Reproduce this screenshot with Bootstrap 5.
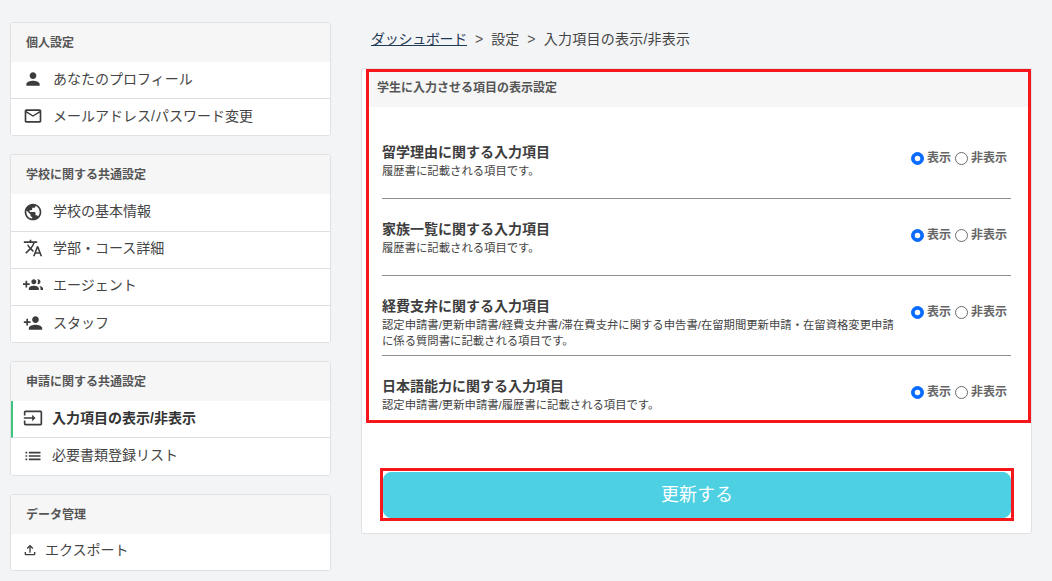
<!DOCTYPE html>
<html lang="ja">
<head>
<meta charset="utf-8">
<title>入力項目の表示/非表示</title>
<link rel="stylesheet" href="https://cdn.jsdelivr.net/npm/bootstrap@5.3.0/dist/css/bootstrap.min.css">
<style>
body{background:#f3f4f6;color:#444;font-family:"Liberation Sans","Noto Sans CJK JP",sans-serif;font-size:14px;}
.page-wrap{padding:22px 20px 0 10px;gap:30px;}
.side-col{width:321px;flex:none;gap:18px;}
.main-col{flex:1 1 0;min-width:0;}
.side-card,.main-card{--bs-card-border-color:#dfe1e4;--bs-card-border-radius:3px;--bs-card-inner-border-radius:2px;}
.side-head{height:39px;background:#f6f6f7;border:0;padding:0 15px;font-size:12px;font-weight:700;color:#555;display:flex;align-items:center;line-height:1;}
.side-item{height:37px;padding:0 12px 2px;gap:10px;color:#444;border-color:#dcdee1;font-size:14px;background:#fff;}
.side-item:last-child{height:36px;}
.side-item.side-plus{height:38px;}
.side-item.side-plus:last-child{height:37px;}
.side-item svg{width:20px;height:20px;fill:#3c3c3c;flex:none;}
.side-up{padding-bottom:4px;}
.side-tight{gap:9px;}
.list-group-flush>.side-active{border-left:2px solid #3ec67f;padding-left:10px;font-weight:700;color:#333;}
.side-export{padding-left:11px;gap:7px;}
.side-item.side-export svg{width:16px;height:16px;}
.crumb-bar{height:34px;padding-left:10px;--bs-breadcrumb-margin-bottom:0;--bs-breadcrumb-divider-color:#555;--bs-breadcrumb-item-active-color:#444;align-items:center;font-size:14px;--bs-breadcrumb-divider:">";}
.crumb-bar a{color:#1f3a57;letter-spacing:-.28px;}
.crumb-bar .active{letter-spacing:.25px;}
.crumb-gap{height:12px;}
.annot-box{border:3px solid #f5171b;margin-left:4px;}
.main-head{height:35px;background:#f6f6f7;font-size:12px;font-weight:700;color:#555;padding:0 8px 4px;display:flex;align-items:center;}
.field-list{padding:15px 17px 0 13px;}
.field-row{min-height:77px;padding:21px 0 6px;border-bottom:1px solid #8e8e8e;gap:10px;}
.field-row:last-child{min-height:0;border:0;padding-bottom:7px;}
.field-text{flex:1 1 0;min-width:0;}
.field-title{font-size:14px;line-height:18px;font-weight:700;color:#3d3d3d;margin-bottom:2px;}
.field-note{font-size:11.35px;line-height:16px;color:#444;}
.radio-set{flex:none;margin-top:7px;gap:4px;margin-right:4px;font-size:12px;line-height:16px;color:#666;font-weight:700;}
.radio-set .form-check{padding:0;margin:0;min-height:0;display:flex;align-items:center;gap:3px;}
.radio-set .form-check-input{float:none;margin:0;width:13px;height:13px;border-color:#6d6d6d;}
.radio-set .form-check-input:checked{background-color:#0a6cff;border-color:#0a6cff;}
.submit-box{border:3px solid #f5171b;padding-top:1px;margin:45px 17px 12px 18px;}
.submit-btn{--bs-btn-bg:#4dd0e1;--bs-btn-border-color:#4dd0e1;--bs-btn-color:#fff;--bs-btn-hover-bg:#4dd0e1;--bs-btn-hover-color:#fff;--bs-btn-border-radius:8px;height:46px;font-size:18px;line-height:1;display:block;width:100%;}
</style>
</head>
<body>
<div class="d-flex align-items-start page-wrap">
  <aside class="d-flex flex-column side-col">
    <div class="card side-card">
      <div class="card-header side-head">個人設定</div>
      <div class="list-group list-group-flush">
        <div class="list-group-item d-flex align-items-center side-item"><svg viewBox="0 0 24 24"><path d="M12 12c2.21 0 4-1.79 4-4s-1.79-4-4-4-4 1.79-4 4 1.79 4 4 4zm0 2c-2.67 0-8 1.34-8 4v2h16v-2c0-2.66-5.33-4-8-4z"/></svg>あなたのプロフィール</div>
        <div class="list-group-item d-flex align-items-center side-item"><svg viewBox="0 0 24 24"><path d="M20 4H4c-1.1 0-1.99.9-1.99 2L2 18c0 1.1.9 2 2 2h16c1.1 0 2-.9 2-2V6c0-1.1-.9-2-2-2zm0 14H4V8l8 5 8-5v10zm-8-7L4 6h16l-8 5z"/></svg>メールアドレス/パスワード変更</div>
      </div>
    </div>
    <div class="card side-card">
      <div class="card-header side-head">学校に関する共通設定</div>
      <div class="list-group list-group-flush">
        <div class="list-group-item d-flex align-items-center side-item side-plus"><svg viewBox="0 0 24 24"><path d="M12 2C6.48 2 2 6.48 2 12s4.48 10 10 10 10-4.48 10-10S17.52 2 12 2zm-1 17.93c-3.95-.49-7-3.85-7-7.93 0-.62.08-1.21.21-1.79L9 15v1c0 1.1.9 2 2 2v1.93zm6.9-2.54c-.26-.81-1-1.39-1.9-1.39h-1v-3c0-.55-.45-1-1-1H8v-2h2c.55 0 1-.45 1-1V7h2c1.1 0 2-.9 2-2v-.41c2.93 1.19 5 4.06 5 7.41 0 2.08-.8 3.97-2.1 5.39z"/></svg>学校の基本情報</div>
        <div class="list-group-item d-flex align-items-center side-item side-up"><svg viewBox="0 0 24 24"><path d="M12.87 15.07l-2.54-2.51.03-.03c1.74-1.94 2.98-4.17 3.71-6.53H17V4h-7V2H8v2H1v1.99h11.17C11.5 7.92 10.44 9.75 9 11.35 8.07 10.32 7.3 9.19 6.69 8h-2c.73 1.63 1.73 3.17 2.98 4.56l-5.09 5.02L4 19l5-5 3.11 3.11.76-2.04zM18.5 10h-2L12 22h2l1.12-3h4.75L21 22h2l-4.5-12zm-2.62 7l1.62-4.33L19.12 17h-3.24z"/></svg>学部・コース詳細</div>
        <div class="list-group-item d-flex align-items-center side-item side-up"><svg viewBox="0 0 24 24"><path d="M8 10H5V7H3v3H0v2h3v3h2v-3h3v-2zm10 1c1.66 0 2.99-1.34 2.99-3S19.66 5 18 5c-.32 0-.63.05-.91.14.57.81.9 1.79.9 2.86s-.34 2.04-.9 2.86c.28.09.59.14.91.14zm-5 0c1.66 0 2.99-1.34 2.99-3S14.66 5 13 5s-3 1.34-3 3 1.34 3 3 3zm6.62 2.16c.83.73 1.38 1.66 1.38 2.84v2h3v-2c0-1.54-2.37-2.49-4.38-2.84zM13 13c-2 0-6 1-6 3v2h12v-2c0-2-4-3-6-3z"/></svg>エージェント</div>
        <div class="list-group-item d-flex align-items-center side-item"><svg viewBox="0 0 24 24"><path d="M15 12c2.21 0 4-1.79 4-4s-1.79-4-4-4-4 1.79-4 4 1.79 4 4 4zm-9-2V7H4v3H1v2h3v3h2v-3h3v-2H6zm9 4c-2.67 0-8 1.34-8 4v2h16v-2c0-2.66-5.33-4-8-4z"/></svg>スタッフ</div>
      </div>
    </div>
    <div class="card side-card">
      <div class="card-header side-head">申請に関する共通設定</div>
      <div class="list-group list-group-flush">
        <div class="list-group-item d-flex align-items-center side-item side-tight side-active"><svg viewBox="0 0 24 24"><path d="M21 3.01H3c-1.1 0-2 .9-2 2V9h2V4.99h18v14.03H3V15H1v4.01c0 1.1.9 1.98 2 1.98h18c1.1 0 2-.88 2-1.98v-14c0-1.11-.9-2-2-2zM11 16l4-4-4-4v3H1v2h10v3z"/></svg>入力項目の表示/非表示</div>
        <div class="list-group-item d-flex align-items-center side-item side-tight side-plus"><svg viewBox="0 0 24 24"><path d="M3 13h2v-2H3v2zm0 4h2v-2H3v2zm0-8h2V7H3v2zm4 4h14v-2H7v2zm0 4h14v-2H7v2zM7 7v2h14V7H7z"/></svg>必要書類登録リスト</div>
      </div>
    </div>
    <div class="card side-card">
      <div class="card-header side-head">データ管理</div>
      <div class="list-group list-group-flush">
        <div class="list-group-item d-flex align-items-center side-item side-export side-up"><svg viewBox="0 0 24 24"><path d="M18 15v3H6v-3H4v3c0 1.1.9 2 2 2h12c1.1 0 2-.9 2-2v-3h-2zM7 9l1.41 1.41L11 7.83V16h2V7.83l2.59 2.58L17 9l-5-5-5 5z"/></svg>エクスポート</div>
      </div>
    </div>
  </aside>
  <main class="main-col">
    <nav aria-label="breadcrumb">
      <ol class="breadcrumb crumb-bar">
        <li class="breadcrumb-item"><a href="#">ダッシュボード</a></li>
        <li class="breadcrumb-item">設定</li>
        <li class="breadcrumb-item active" aria-current="page">入力項目の表示/非表示</li>
      </ol>
    </nav>
    <div class="crumb-gap"></div>
    <div class="card main-card">
      <div class="annot-box">
        <div class="main-head">学生に入力させる項目の表示設定</div>
        <div class="field-list">
          <div class="d-flex align-items-start field-row">
            <div class="field-text"><div class="field-title">留学理由に関する入力項目</div><div class="field-note">履歴書に記載される項目です。</div></div>
            <div class="d-flex radio-set">
              <label class="form-check"><input class="form-check-input" type="radio" name="r1" checked>表示</label>
              <label class="form-check"><input class="form-check-input" type="radio" name="r1">非表示</label>
            </div>
          </div>
          <div class="d-flex align-items-start field-row">
            <div class="field-text"><div class="field-title">家族一覧に関する入力項目</div><div class="field-note">履歴書に記載される項目です。</div></div>
            <div class="d-flex radio-set">
              <label class="form-check"><input class="form-check-input" type="radio" name="r2" checked>表示</label>
              <label class="form-check"><input class="form-check-input" type="radio" name="r2">非表示</label>
            </div>
          </div>
          <div class="d-flex align-items-start field-row">
            <div class="field-text"><div class="field-title">経費支弁に関する入力項目</div><div class="field-note">認定申請書/更新申請書/経費支弁書/滞在費支弁に関する申告書/在留期間更新申請・在留資格変更申請に係る質問書に記載される項目です。</div></div>
            <div class="d-flex radio-set">
              <label class="form-check"><input class="form-check-input" type="radio" name="r3" checked>表示</label>
              <label class="form-check"><input class="form-check-input" type="radio" name="r3">非表示</label>
            </div>
          </div>
          <div class="d-flex align-items-start field-row">
            <div class="field-text"><div class="field-title">日本語能力に関する入力項目</div><div class="field-note">認定申請書/更新申請書/履歴書に記載される項目です。</div></div>
            <div class="d-flex radio-set">
              <label class="form-check"><input class="form-check-input" type="radio" name="r4" checked>表示</label>
              <label class="form-check"><input class="form-check-input" type="radio" name="r4">非表示</label>
            </div>
          </div>
        </div>
      </div>
      <div class="submit-box"><button type="button" class="btn submit-btn">更新する</button></div>
    </div>
  </main>
</div>
<script src="https://cdn.jsdelivr.net/npm/bootstrap@5.3.0/dist/js/bootstrap.bundle.min.js"></script>
</body>
</html>
